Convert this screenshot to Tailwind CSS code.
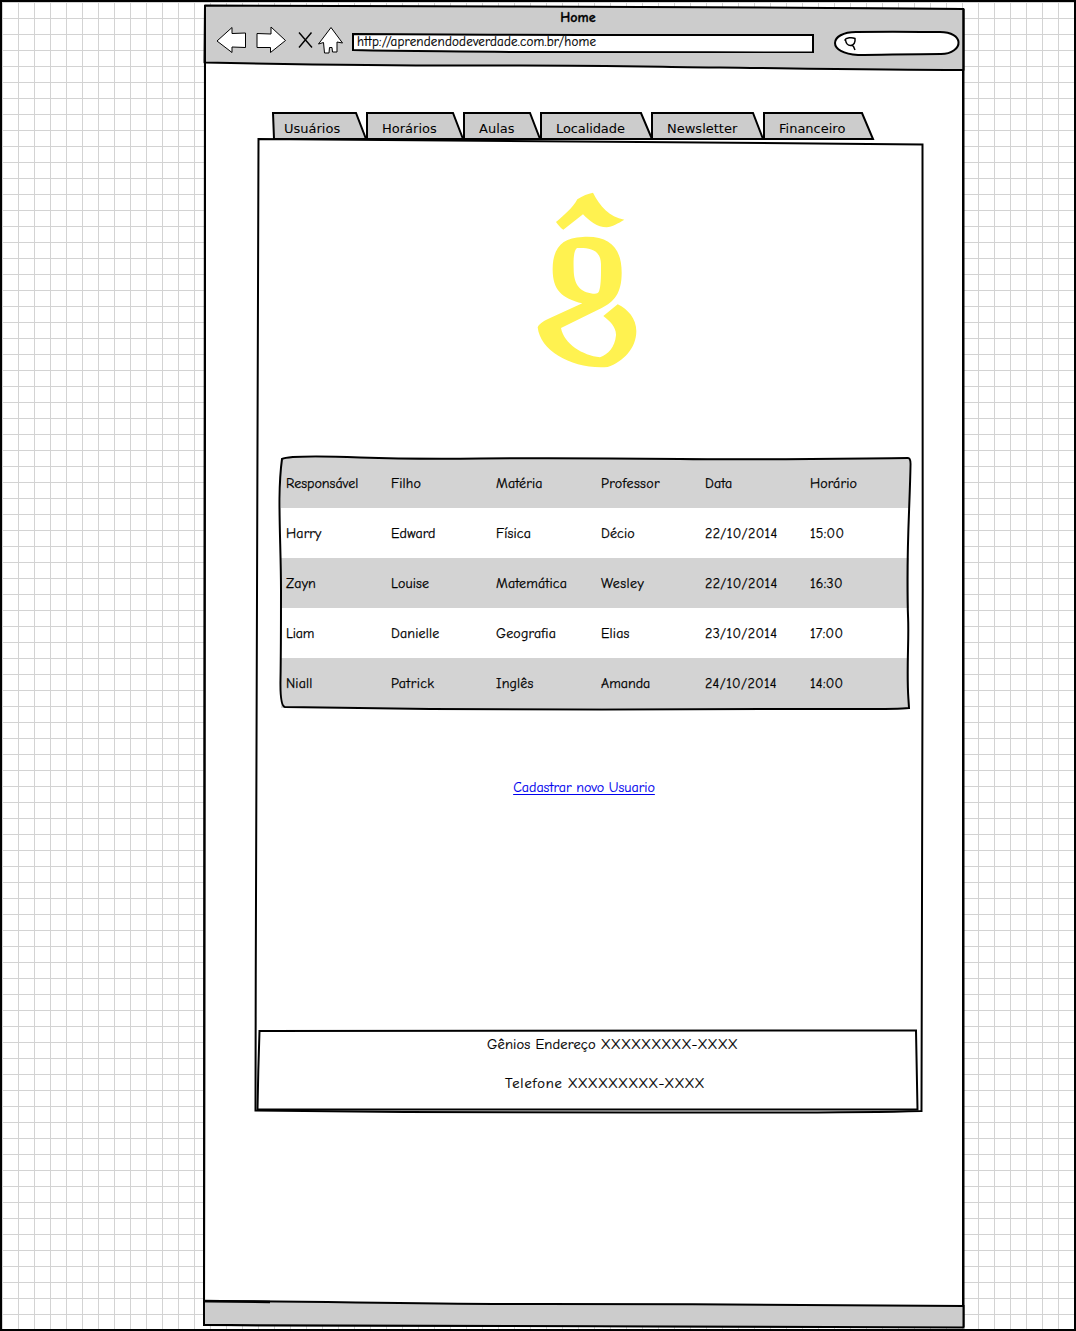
<!DOCTYPE html>
<html lang="pt-BR">
<head>
<meta charset="utf-8">
<title>Home</title>
<script src="https://cdn.jsdelivr.net/npm/@tailwindcss/browser@4"></script>
</head>
<body class="bg-white text-black">
<div class="relative box-border h-[1331px] w-[1076px] overflow-hidden border-2 border-black bg-[linear-gradient(#d3d3d3_1px,transparent_1px),linear-gradient(90deg,#d3d3d3_1px,transparent_1px)] bg-[size:16px_16px] font-['Comic_Sans_MS','Comic_Neue','Open_Sans',sans-serif] text-[14px]">
  <!-- hand-drawn outlines -->
  <svg class="absolute -left-0.5 -top-0.5" width="1076" height="1331" viewBox="0 0 1076 1331" fill="none" stroke="#000" stroke-width="2">
    <path fill="#fff" d="M205 6L963 9V1327L204 1325Z"/>
    <path fill="#ccc" stroke-linejoin="round" d="M205 5.500C300 6 400 5.500 520 6.500S830 7 963.500 9V70C880 70 800 68.500 720 67.500S590 65 490 65.500S280 64 204.500 62.500Z"/>
    <path d="M205 5V400C203.500 700 204.500 1000 204 1326M963.500 9V1327"/>
    <path fill="#ccc" d="M204 1301C320 1301 400 1304 540 1304S850 1305 963.500 1306V1327.500C800 1327 500 1325.500 204 1325Z"/>
    <path stroke-width="2.500" d="M204 1301L270 1302"/>
    <path fill="#fff" d="M258.500 139C400 140 520 141.500 640 142S830 144 922.500 144.500C922 460 924 800 921.500 1111C840 1113.500 740 1112 640 1112.500S380 1112 255.500 1110.500C256 800 257 500 258.500 139Z"/>
    <path fill="#fff" d="M259.500 1031C400 1030 650 1030 916 1030.500L917.500 1109.500H257.500C258 1080 258.500 1060 259.500 1031Z"/>
  </svg>

  <div class="relative ml-[202px] flex h-[1327px] w-[760px] flex-col">
    <header class="flex h-[62px] flex-col pt-2">
      <h1 class="h-[15px] pr-[12px] text-center text-[14px] leading-4 font-bold [-webkit-text-stroke:0.3px]">Home</h1>
      <div class="flex h-8 items-start">
        <svg class="ml-3 mt-px shrink-0" width="130" height="30" viewBox="216 26 130 30" fill="#fff" stroke="#000" stroke-width="1">
          <path d="M217 41L232 27.500V33.500L245.500 33V47.500L232 47V52.500Z"/>
          <path d="M285.500 40.500L271 27V34L257 33.500V47.500H270.500V52.500Z"/>
          <path stroke-width="1.400" d="M299 32.500L312 47.500M311.500 32.500L299 47.500"/>
          <path d="M331 27.500L342.500 43L337 42V52H332.500L332 47.500H329.500L329 53H324.500L323.500 42.500L318.500 44Z"/>
        </svg>
        <div class="relative ml-[6px] mt-2 h-5 w-[462px] pl-[5px] text-[13px] leading-[18px] tracking-[0.2px] [-webkit-text-stroke:0.2px]">
          <svg class="absolute inset-0" width="462" height="20" fill="#fff" stroke="#000" stroke-width="2"><path d="M1 1C90 1 150 2 230 2S350 2 461 2V19.500C360 19 240 20 160 19S60 18.500 1 17Z"/></svg>
          <span class="relative">http://aprendendodeverdade.com.br/home</span>
        </div>
        <svg class="ml-5 mt-[5px] shrink-0" width="126" height="26" viewBox="834 30 126 26" fill="#fff" stroke="#000" stroke-width="2">
          <path d="M856 32C900 31.500 920 32 940 32C952 32 958 37 958.500 42C959 48 952 54 941 54C910 54 880 55 858 55C843 54 835 49 835 43C835 37 843 32 856 32Z"/>
          <path stroke-width="1.500" fill="none" d="M844.500 40.500C846 37.500 852 37 855 38.500C855.500 42 854 45.500 850.500 45.500C847 45.500 846 43 845.500 40M852 45.500L853.500 46.500L855 50"/>
        </svg>
      </div>
    </header>

    <nav class="ml-[68px] mt-[48px] flex h-7 font-['Verdana','DejaVu_Sans',sans-serif] text-[13px] leading-[34px]">
      <a class="relative w-[94px] pl-3"><svg class="absolute left-0 top-0 overflow-visible" width="94" height="28" fill="#ccc" stroke="#000" stroke-width="2"><path d="M1 1H84L94 27H2Z"/></svg><span class="relative">Usuários</span></a>
      <a class="relative w-[97px] pl-4"><svg class="absolute left-0 top-0 overflow-visible" width="97" height="28" fill="#ccc" stroke="#000" stroke-width="2"><path d="M1 1H87L97 27H1Z"/></svg><span class="relative">Horários</span></a>
      <a class="relative w-[77px] pl-4"><svg class="absolute left-0 top-0 overflow-visible" width="77" height="28" fill="#ccc" stroke="#000" stroke-width="2"><path d="M1 1H67L77 27H1Z"/></svg><span class="relative">Aulas</span></a>
      <a class="relative w-[111px] pl-4"><svg class="absolute left-0 top-0 overflow-visible" width="111" height="28" fill="#ccc" stroke="#000" stroke-width="2"><path d="M1 1H101L112 27H1Z"/></svg><span class="relative tracking-[-0.1px]">Localidade</span></a>
      <a class="relative w-[112px] pl-4"><svg class="absolute left-0 top-0 overflow-visible" width="112" height="28" fill="#ccc" stroke="#000" stroke-width="2"><path d="M1 1H102L112 27H1Z"/></svg><span class="relative">Newsletter</span></a>
      <a class="relative w-[110px] pl-4"><svg class="absolute left-0 top-0 overflow-visible" width="110" height="28" fill="#ccc" stroke="#000" stroke-width="2"><path d="M1 1H99L110 27H1Z"/></svg><span class="relative">Financeiro</span></a>
    </nav>

    <svg class="ml-[316px] mt-[40px] shrink-0" width="130" height="200" viewBox="0 0 390 600" fill="#fff250" fill-rule="evenodd">
      <path d="M108 126C132 106 158 84 172 58C188 46 204 42 219 38C240 78 267 111 313 119C295 130 276 140 260 142C232 142 208 123 189 103L130 149C121 144 115 135 108 126Z"/>
      <path d="M188 171C270 166 305 205 305 278C305 340 282 365 245 384L123 444C132 492 188 526 240 532C264 523 285 502 288 466C289 441 270 424 250 408L293 373C324 388 349 416 349 453C349 505 310 545 263 561C161 569 61 516 53 442C58 429 75 421 92 413L187 370C123 355 97 327 98 265C99 204 126 173 188 171ZM171 204C199 203 242 203 243 252V275C243 304 241 326 236 336C233 341 226 341 219 341C181 336 161 315 161 266C160 239 161 210 171 204Z"/>
    </svg>

    <section class="relative ml-[77px] mt-[78px] h-[250px] w-[628px] shrink-0 leading-[49px] tracking-[0.15px] [-webkit-text-stroke:0.25px]">
      <div class="grid h-[50px] grid-cols-[105px_105px_105px_104px_105px_99px] bg-[#d3d3d3] pl-[5px] pt-px"><span class="tracking-normal">Responsável</span><span>Filho</span><span>Matéria</span><span class="tracking-[0.35px]">Professor</span><span>Data</span><span>Horário</span></div>
      <div class="grid h-[50px] grid-cols-[105px_105px_105px_104px_105px_99px] bg-white pl-[5px] pt-px"><span>Harry</span><span>Edward</span><span>Física</span><span>Décio</span><span class="tracking-[0.35px]">22/10/2014</span><span class="tracking-[0.3px]">15:00</span></div>
      <div class="grid h-[50px] grid-cols-[105px_105px_105px_104px_105px_99px] bg-[#d3d3d3] pl-[5px] pt-px"><span>Zayn</span><span>Louise</span><span>Matemática</span><span class="tracking-[0.5px]">Wesley</span><span class="tracking-[0.35px]">22/10/2014</span><span class="tracking-[0.3px]">16:30</span></div>
      <div class="grid h-[50px] grid-cols-[105px_105px_105px_104px_105px_99px] bg-white pl-[5px] pt-px"><span class="tracking-[-0.2px]">Liam</span><span>Danielle</span><span>Geografia</span><span>Elias</span><span class="tracking-[0.35px]">23/10/2014</span><span class="tracking-[0.3px]">17:00</span></div>
      <div class="grid h-[50px] grid-cols-[105px_105px_105px_104px_105px_99px] bg-[#d3d3d3] pl-[5px] pt-px"><span>Niall</span><span class="tracking-[0.4px]">Patrick</span><span>Inglês</span><span class="tracking-normal">Amanda</span><span class="tracking-[0.35px]">24/10/2014</span><span class="tracking-[0.3px]">14:00</span></div>
      <svg class="absolute -left-px -top-[3px] overflow-visible" width="632" height="256" viewBox="280 455 632 256" fill="none" stroke="#000" stroke-width="2">
        <path d="M282 459C288 456 330 456.500 360 457.500S430 459 480 458.500S590 458 680 459S850 458.500 908 458Q910.500 458 910.500 464C910 500 907.500 530 907.500 580S909 610 908 650S908 690 909 708C890 710 840 708.500 780 709S500 710 430 709S340 708 285 707Q280 706 280.500 680C281 650 281 640 281 590S277 495 282 459Z"/>
      </svg>
    </section>

    <div class="mt-[69px] h-[21px] text-center"><a class="text-[#0000ee] underline underline-offset-2 [-webkit-text-stroke:0.15px]" href="#">Cadastrar novo Usuario</a></div>

    <footer class="mt-[235px] flex h-[78px] flex-col pt-[1px] text-[14.5px] leading-[22px] [-webkit-text-stroke:0.2px]">
      <p class="ml-[283px] whitespace-nowrap tracking-[0.15px]">Gênios Endereço XXXXXXXXX-XXXX</p>
      <p class="ml-[301px] mt-[17px] whitespace-nowrap tracking-[0.15px]"><span class="tracking-[0.85px]">Telefone</span> XXXXXXXXX-XXXX</p>
    </footer>
  </div>
</div>
</body>
</html>
